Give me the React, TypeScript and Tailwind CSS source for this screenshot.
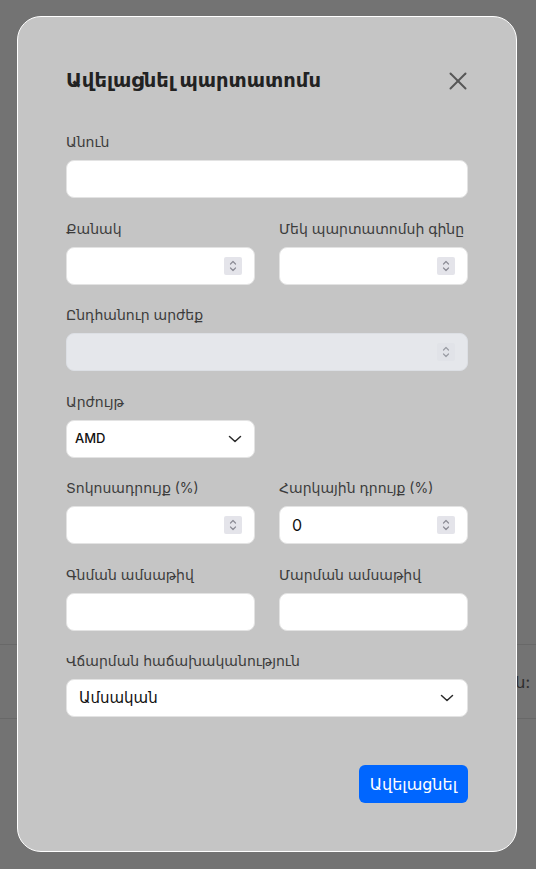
import * as React from "react";

const font = { fontFamily: '"Inter", "DejaVu Sans", sans-serif' };

function Spinner({ muted = false }: { muted?: boolean }) {
  const c = muted ? "#9a9ca4" : "#8c8c96";
  return (
    <div className={muted ? "flex h-[18px] w-[18px] shrink-0 items-center justify-center rounded-[2px] bg-[#e1e3e8]" : "flex h-[18px] w-[18px] shrink-0 items-center justify-center rounded-[2px] bg-[#e4e4ea]"}>
      <svg width="10" height="14" viewBox="0 0 10 14" fill="none">
        <path d="M2.5 5 5 2.5 7.5 5" stroke={c} strokeWidth="1.2" strokeLinecap="round" strokeLinejoin="round" />
        <path d="M2.5 9 5 11.5 7.5 9" stroke={c} strokeWidth="1.2" strokeLinecap="round" strokeLinejoin="round" />
      </svg>
    </div>
  );
}

function Chevron() {
  return (
    <svg width="24" height="24" viewBox="0 0 24 24" fill="none" stroke="#2a2a2a" strokeWidth="1.5" strokeLinecap="round" strokeLinejoin="round">
      <path d="m6.5 9.5 5.5 5 5.5-5" />
    </svg>
  );
}

function Field({ label, children }: { label: string; children: React.ReactNode }) {
  return (
    <div className="flex flex-col">
      <label className="mb-[9px] h-[19px] text-[14px] leading-[19px] text-[#3c3c3c]">{label}</label>
      {children}
    </div>
  );
}

function TextBox({ value = "" }: { value?: string }) {
  return (
    <div className="flex h-[38px] items-center rounded-[8px] border border-[#e3e3e3] bg-white px-3">
      <input
        readOnly
        value={value}
        className="w-full bg-transparent text-[16px] text-[#111] outline-none"
        style={font}
      />
    </div>
  );
}

function NumberBox({ value = "", disabled = false }: { value?: string; disabled?: boolean }) {
  return (
    <div
      className={
        disabled
          ? "flex h-[38px] items-center gap-2 rounded-[8px] border border-[#dcdfe4] bg-[#e5e7eb] pl-3 pr-[12px]"
          : "flex h-[38px] items-center gap-2 rounded-[8px] border border-[#e3e3e3] bg-white pl-3 pr-[12px]"
      }
    >
      <input
        readOnly
        value={value}
        disabled={disabled}
        className="min-w-0 flex-1 bg-transparent text-[16px] text-[#111] outline-none"
        style={font}
      />
      <Spinner muted={disabled} />
    </div>
  );
}

export default function App() {
  return (
    <div className="relative h-[869px] w-full overflow-hidden bg-[#737373]" style={font}>
      {/* page behind the overlay */}
      <div className="pt-[644px]">
        <div className="flex h-[75px] items-center justify-end border-y border-[#686868] pr-[6px] text-[16px] text-[#2e2e2e]">
          Ընդհանուր արժեքն:
        </div>
      </div>

      {/* modal */}
      <div className="absolute left-[17px] top-[16px] w-[500px] rounded-[24px] border border-white bg-[#c5c5c5] px-[48px] pb-[48px] pt-[48px]">
        <div className="flex h-[32px] items-center justify-between">
          <h2 className="text-[19.5px] font-bold text-[#222]">Ավելացնել պարտատոմս</h2>
          <button className="-mr-[2px] flex h-[24px] w-[24px] items-center justify-center">
            <svg width="18" height="18" viewBox="0 0 18 18" fill="none" stroke="#575757" strokeWidth="2" strokeLinecap="round">
              <path d="M1.5 1.5 16.5 16.5" />
              <path d="M16.5 1.5 1.5 16.5" />
            </svg>
          </button>
        </div>

        <div className="mt-[35px] flex flex-col gap-y-[20.5px]">
          <Field label="Անուն">
            <TextBox />
          </Field>

          <div className="grid grid-cols-2 gap-x-[24px]">
            <Field label="Քանակ">
              <NumberBox />
            </Field>
            <Field label="Մեկ պարտատոմսի գինը">
              <NumberBox />
            </Field>
          </div>

          <Field label="Ընդհանուր արժեք">
            <NumberBox disabled />
          </Field>

          <div className="grid grid-cols-2 gap-x-[24px]">
            <Field label="Արժույթ">
              <div className="flex h-[38px] items-center justify-between rounded-[8px] border border-[#e3e3e3] bg-white pl-[8px] pr-[7px]">
                <span className="text-[13px] font-medium text-[#111]">AMD</span>
                <Chevron />
              </div>
            </Field>
          </div>

          <div className="grid grid-cols-2 gap-x-[24px]">
            <Field label="Տոկոսադրույք (%)">
              <NumberBox />
            </Field>
            <Field label="Հարկային դրույք (%)">
              <NumberBox value="0" />
            </Field>
          </div>

          <div className="grid grid-cols-2 gap-x-[24px]">
            <Field label="Գնման ամսաթիվ">
              <TextBox />
            </Field>
            <Field label="Մարման ամսաթիվ">
              <TextBox />
            </Field>
          </div>

          <Field label="Վճարման հաճախականություն">
            <div className="flex h-[38px] items-center justify-between rounded-[8px] border border-[#e3e3e3] bg-white pl-[12px] pr-[8px]">
              <span className="text-[15px] text-[#111]">Ամսական</span>
              <Chevron />
            </div>
          </Field>
        </div>

        <div className="mt-[48px] flex justify-end">
          <button className="h-[38px] rounded-[6px] bg-[#0066ff] px-[11px] text-[16px] text-white">
            Ավելացնել
          </button>
        </div>
      </div>
    </div>
  );
}
